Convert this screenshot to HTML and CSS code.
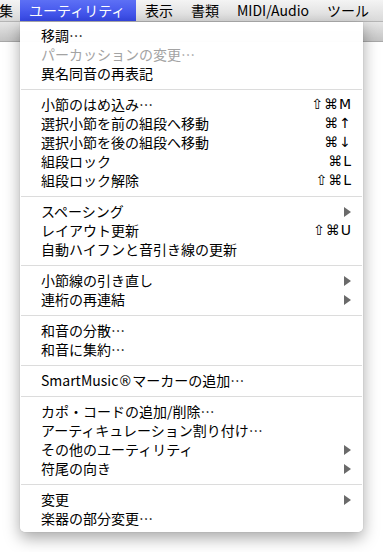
FILE: index.html
```html
<!DOCTYPE html>
<html lang="ja">
<head>
    <meta charset="UTF-8">
    <title>ユーティリティ</title>
    <link rel="stylesheet" href="styles.css">
</head>
<body>
    <div class="menubar">
        <span class="menubar-item first">集</span>
        <span class="menubar-item active">ユーティリティ</span>
        <span class="menubar-item">表示</span>
        <span class="menubar-item">書類</span>
        <span class="menubar-item">MIDI/Audio</span>
        <span class="menubar-item">ツール</span>
    </div>
    <div class="toolbar"></div>

    <div class="menu">
        <div class="item">移調…</div>
        <div class="item disabled">パーカッションの変更…</div>
        <div class="item">異名同音の再表記</div>
        <div class="sep"></div>
        <div class="item">小節のはめ込み…<span class="key">⇧⌘M</span></div>
        <div class="item">選択小節を前の組段へ移動<span class="key">⌘↑</span></div>
        <div class="item">選択小節を後の組段へ移動<span class="key">⌘↓</span></div>
        <div class="item">組段ロック<span class="key">⌘L</span></div>
        <div class="item">組段ロック解除<span class="key">⇧⌘L</span></div>
        <div class="sep"></div>
        <div class="item">スペーシング<svg class="arrow" viewBox="0 0 7 10"><polygon points="0,0 7,5 0,10"/></svg></div>
        <div class="item">レイアウト更新<span class="key">⇧⌘U</span></div>
        <div class="item">自動ハイフンと音引き線の更新</div>
        <div class="sep"></div>
        <div class="item">小節線の引き直し<svg class="arrow" viewBox="0 0 7 10"><polygon points="0,0 7,5 0,10"/></svg></div>
        <div class="item">連桁の再連結<svg class="arrow" viewBox="0 0 7 10"><polygon points="0,0 7,5 0,10"/></svg></div>
        <div class="sep"></div>
        <div class="item">和音の分散…</div>
        <div class="item">和音に集約…</div>
        <div class="sep"></div>
        <div class="item"><span>SmartMusic<span class="reg">®</span>マーカーの追加…</span></div>
        <div class="sep"></div>
        <div class="item">カポ・コードの追加/削除…</div>
        <div class="item">アーティキュレーション割り付け…</div>
        <div class="item">その他のユーティリティ<svg class="arrow" viewBox="0 0 7 10"><polygon points="0,0 7,5 0,10"/></svg></div>
        <div class="item">符尾の向き<svg class="arrow" viewBox="0 0 7 10"><polygon points="0,0 7,5 0,10"/></svg></div>
        <div class="sep"></div>
        <div class="item">変更<svg class="arrow" viewBox="0 0 7 10"><polygon points="0,0 7,5 0,10"/></svg></div>
        <div class="item">楽器の部分変更…</div>
    </div>
</body>
</html>
```

FILE: styles.css
```css
* {
    margin: 0;
    padding: 0;
    box-sizing: border-box;
}

body {
    width: 383px;
    height: 552px;
    overflow: hidden;
    background: #fff;
    position: relative;
    font-family: "Noto Sans CJK JP", "Noto Sans", sans-serif;
    font-size: 14px;
    color: #000;
}

.menubar {
    height: 22px;
    display: flex;
    white-space: nowrap;
    background: linear-gradient(#f4f4f4, #d9d9d9);
    border-bottom: 1px solid #b5b5b5;
}

.menubar-item {
    padding: 0 9px;
    line-height: 21px;
    height: 21px;
}

.menubar-item.first {
    margin-left: -10px;
    padding-right: 7px;
}

.menubar-item.active {
    width: 116px;
    color: #fff;
    background: linear-gradient(#5d70f5, #3547e6);
}

.toolbar {
    height: 20px;
    background: linear-gradient(#e6e6e6, #c4c4c4);
    border-bottom: 1px solid #a8a8a8;
}

.menu {
    position: absolute;
    left: 20px;
    top: 22px;
    width: 343px;
    padding: 4px 0;
    background: rgba(255, 255, 255, 0.98);
    border-radius: 0 0 5px 5px;
    box-shadow: 0 6px 16px rgba(0, 0, 0, 0.35), 0 0 1px rgba(0, 0, 0, 0.3);
}

.item {
    display: flex;
    align-items: center;
    justify-content: space-between;
    height: 19px;
    line-height: 19px;
    padding: 0 12px 0 21px;
    white-space: nowrap;
}

.item.disabled {
    color: #a3a3a3;
}

.key {
    font-family: "DejaVu Sans", sans-serif;
    font-size: 14px;
    letter-spacing: 1px;
    margin-right: -1px;
}

.reg {
    font-family: "DejaVu Sans", sans-serif;
    font-size: 14px;
}

.arrow {
    width: 7px;
    height: 10px;
    fill: #6a6a6a;
}

.sep {
    height: 12px;
    display: flex;
    align-items: center;
}

.sep::after {
    content: "";
    flex: 1;
    height: 1px;
    margin: 0 1px;
    background: #dcdcdc;
}
```
